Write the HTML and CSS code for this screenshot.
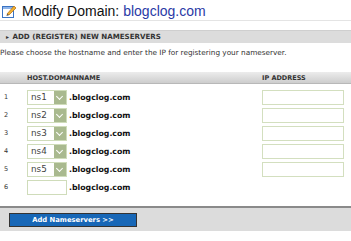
FILE: index.html
```html
<!DOCTYPE html>
<html lang="en">
<head>
    <meta charset="UTF-8">
    <title>Modify Domain</title>
    <link rel="stylesheet" href="styles.css">
</head>
<body>
    <div class="page">
        <div class="title-row">
            <svg class="title-icon" width="16" height="16" viewBox="0 0 16 16">
                <rect x="1.5" y="3.5" width="11" height="11" fill="#fff" stroke="#3a74c4"/>
                <rect x="2" y="4" width="10" height="2" fill="#8fb4e8"/>
                <path d="M6 11 L13 3 L15 5 L8 12 Z" fill="#f2b233" stroke="#b06a10" stroke-width="0.7"/>
                <path d="M6 11 L5.5 13 L8 12 Z" fill="#444"/>
            </svg>
            <h1 class="title">Modify Domain: <span class="domain">blogclog.com</span></h1>
        </div>

        <div class="section-bar"><span class="arrow">&#9656;</span> ADD (REGISTER) NEW NAMESERVERS</div>
        <p class="intro">Please choose the hostname and enter the IP for registering your nameserver.</p>

        <div class="ns-table">
            <div class="ns-head">
                <span class="col-num"></span>
                <span class="col-host">HOST.DOMAINNAME</span>
                <span class="col-ip">IP ADDRESS</span>
            </div>
            <div class="ns-row">
                <span class="col-num">1</span>
                <span class="col-host"><span class="host-select">ns1<i class="sel-btn"></i></span><b>.blogclog.com</b></span>
                <span class="col-ip"><span class="ip-input"></span></span>
            </div>
            <div class="ns-row">
                <span class="col-num">2</span>
                <span class="col-host"><span class="host-select">ns2<i class="sel-btn"></i></span><b>.blogclog.com</b></span>
                <span class="col-ip"><span class="ip-input"></span></span>
            </div>
            <div class="ns-row">
                <span class="col-num">3</span>
                <span class="col-host"><span class="host-select">ns3<i class="sel-btn"></i></span><b>.blogclog.com</b></span>
                <span class="col-ip"><span class="ip-input"></span></span>
            </div>
            <div class="ns-row">
                <span class="col-num">4</span>
                <span class="col-host"><span class="host-select">ns4<i class="sel-btn"></i></span><b>.blogclog.com</b></span>
                <span class="col-ip"><span class="ip-input"></span></span>
            </div>
            <div class="ns-row">
                <span class="col-num">5</span>
                <span class="col-host"><span class="host-select">ns5<i class="sel-btn"></i></span><b>.blogclog.com</b></span>
                <span class="col-ip"><span class="ip-input"></span></span>
            </div>
            <div class="ns-row">
                <span class="col-num">6</span>
                <span class="col-host"><span class="host-text"></span><b>.blogclog.com</b></span>
                <span class="col-ip"></span>
            </div>
        </div>

        <div class="footer">
            <button class="add-button">Add Nameservers &gt;&gt;</button>
        </div>
    </div>
</body>
</html>
```

FILE: styles.css
```css
body {
    margin: 0;
    padding: 0;
    background: #fff;
    font-family: "DejaVu Sans", Verdana, sans-serif;
}

.page {
    width: 351px;
}

.title-row {
    display: flex;
    align-items: center;
    gap: 5px;
    height: 19px;
    padding: 1px 0 0 1px;
    border-bottom: 1px solid #e4e4e4;
}

.title {
    margin: 0;
    font-family: "Liberation Sans", Arial, sans-serif;
    font-weight: normal;
    font-size: 14px;
    color: #111;
}

.domain {
    color: #2a3aa6;
}

.section-bar {
    margin-top: 9px;
    height: 12px;
    line-height: 12px;
    background: #dcdcdc;
    border-top: 1px solid #cfcfcf;
    padding-left: 6px;
    font-size: 7.1px;
    font-weight: bold;
    color: #333;
}

.arrow {
    font-size: 6px;
    margin-right: 1px;
}

.intro {
    margin: 5px 0 0 0;
    font-size: 7.3px;
    color: #333;
}

.ns-table {
    margin-top: 15px;
}

.ns-head {
    display: flex;
    align-items: center;
    height: 11px;
    background: linear-gradient(#ececec, #cdcdcd);
    border-bottom: 1px solid #b8b8b8;
    font-size: 6.5px;
    font-weight: bold;
    color: #333;
}

.ns-row {
    display: flex;
    align-items: center;
    height: 18px;
    font-size: 7.5px;
}

.ns-head + .ns-row {
    margin-top: 4px;
}

.col-num {
    width: 27px;
    padding-left: 4px;
    box-sizing: border-box;
    color: #333;
    font-size: 6.5px;
}

.col-host {
    width: 235px;
    display: flex;
    align-items: center;
    gap: 2px;
}

.col-host b {
    color: #111;
    font-size: 7.8px;
}

.col-ip {
    width: 82px;
}

.host-select,
.host-text {
    display: flex;
    align-items: center;
    justify-content: space-between;
    width: 40px;
    height: 15px;
    box-sizing: border-box;
    border: 1px solid #cfdcba;
    padding-left: 3px;
    font-size: 8.8px;
    color: #444;
    background: #fff;
}

.sel-btn {
    width: 12px;
    height: 13px;
    background: #a9b98f;
    position: relative;
}

.sel-btn::after {
    content: "";
    position: absolute;
    left: 3px;
    top: 3px;
    width: 4px;
    height: 4px;
    border-right: 1.5px solid #fff;
    border-bottom: 1.5px solid #fff;
    transform: rotate(45deg);
}

.ip-input {
    display: block;
    width: 82px;
    height: 15px;
    box-sizing: border-box;
    border: 1.5px solid #d3dfbf;
    background: #fff;
}

.footer {
    margin-top: 10px;
    border-top: 2px solid #8a8a8a;
    background: #dcdcdc;
    height: 25px;
    padding: 5px 0 0 9px;
    box-sizing: border-box;
}

.add-button {
    display: block;
    width: 128px;
    height: 14px;
    padding: 0;
    border: 1px solid #333;
    background: #1767b7;
    color: #fff;
    font-family: "DejaVu Sans", Verdana, sans-serif;
    font-size: 6.8px;
    font-weight: bold;
    cursor: pointer;
}
```
